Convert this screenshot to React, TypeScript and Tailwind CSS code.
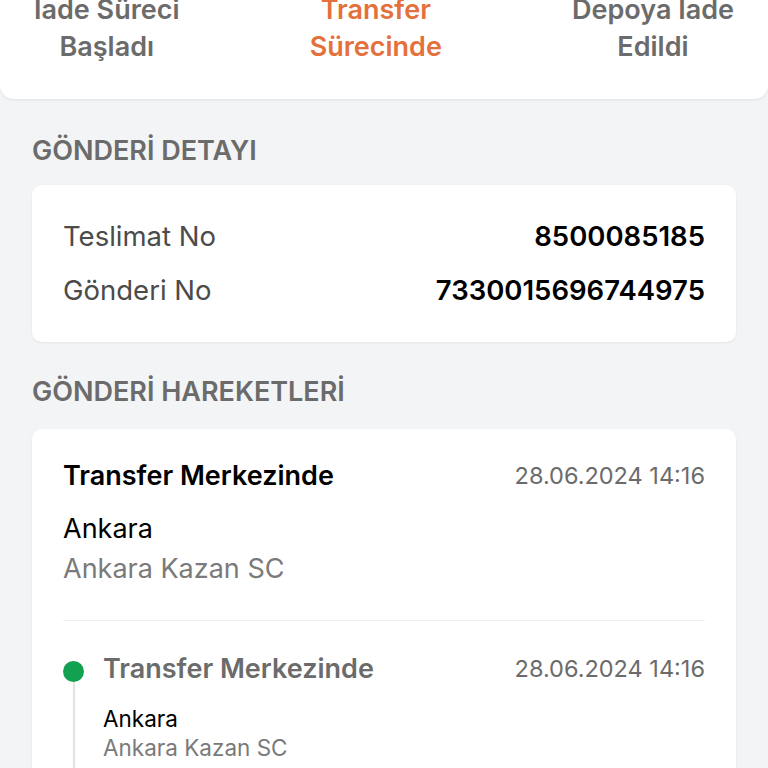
export default function App() {
  const steps = [
    { lines: ["İade Süreci", "Başladı"], active: false },
    { lines: ["Transfer", "Sürecinde"], active: true },
    { lines: ["Depoya İade", "Edildi"], active: false },
  ];

  return (
    <div
      className="h-screen w-full overflow-hidden bg-[#f3f4f6]"
      style={{ fontFamily: "Inter, 'Noto Sans', sans-serif" }}
    >
      {/* ---------- Status steps ---------- */}
      <div className="-mt-[9px] rounded-b-[14px] bg-white px-[34px] pb-[34px] shadow-[0_1px_3px_rgba(0,0,0,0.08)]">
        <div className="flex justify-between">
          {steps.map((s, i) => (
            <div
              key={i}
              className={
                "text-center text-[27px] font-semibold leading-[37px] " +
                (s.active ? "text-[#e4703c]" : "text-[#6b6b6b]")
              }
            >
              {s.lines.map((l) => (
                <div key={l}>{l}</div>
              ))}
            </div>
          ))}
        </div>
      </div>

      <div className="px-[32px]">
        {/* ---------- Detail ---------- */}
        <h2 className="mt-[33px] text-[27px] font-semibold leading-[37px] text-[#6b6b6b]">
          GÖNDERİ DETAYI
        </h2>
        <div className="mt-[16px] rounded-[10px] bg-white px-[31px] pb-[36px] pt-[35px] shadow-[0_1px_3px_rgba(0,0,0,0.06)]">
          <div className="flex items-center justify-between text-[27.5px] leading-[32px]">
            <span className="text-[#4b4b4b]">Teslimat No</span>
            <span className="font-semibold text-black">8500085185</span>
          </div>
          <div className="mt-[22px] flex items-center justify-between text-[27.5px] leading-[32px]">
            <span className="text-[#4b4b4b]">Gönderi No</span>
            <span className="font-semibold text-black">7330015696744975</span>
          </div>
        </div>

        {/* ---------- Movements ---------- */}
        <h2 className="mt-[31px] text-[27px] font-semibold leading-[37px] text-[#6b6b6b]">
          GÖNDERİ HAREKETLERİ
        </h2>
        <div className="mt-[19px] rounded-[10px] bg-white px-[31px] pt-[30px] shadow-[0_1px_3px_rgba(0,0,0,0.06)]">
          <div className="flex items-center justify-between">
            <span className="text-[27px] font-semibold leading-[34px] text-black">
              Transfer Merkezinde
            </span>
            <span className="text-[23.5px] leading-[34px] text-[#6b6b6b]">28.06.2024 14:16</span>
          </div>
          <div className="mt-[19px] text-[27px] leading-[34px] text-black">Ankara</div>
          <div className="mt-[6px] text-[27px] leading-[34px] text-[#7a7a7a]">Ankara Kazan SC</div>
          <div className="mt-[34px] h-px bg-[#efefef]" />

          <div className="relative mt-[31px] pl-[40px]">
            <div className="absolute left-[10px] top-[12px] h-[200px] w-[2px] bg-[#e2e2e2]" />
            <div className="absolute left-0 top-[9px] h-[21px] w-[21px] rounded-full bg-[#12a150]" />
            <div className="flex items-center justify-between">
              <span className="text-[27px] font-semibold leading-[34px] text-[#6b6b6b]">
                Transfer Merkezinde
              </span>
              <span className="text-[23.5px] leading-[34px] text-[#6b6b6b]">28.06.2024 14:16</span>
            </div>
            <div className="mt-[18px] text-[22.5px] leading-[29px] text-black">Ankara</div>
            <div className="text-[22.5px] leading-[29px] text-[#7a7a7a]">Ankara Kazan SC</div>
            <div className="h-[60px]" />
          </div>
        </div>
      </div>
    </div>
  );
}
